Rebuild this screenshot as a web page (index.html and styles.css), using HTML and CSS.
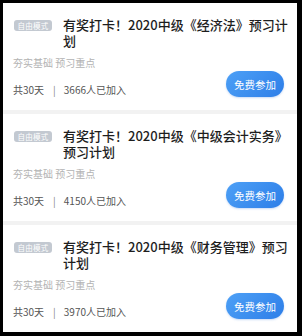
FILE: index.html
```html
<!DOCTYPE html>
<html lang="zh-CN">
<head>
<meta charset="utf-8">
<link rel="stylesheet" href="styles.css">
</head>
<body>
<div class="frame">
  <div class="card">
    <div class="head">
      <span class="badge">自由模式</span>
      <h2 class="title">有奖打卡！2020中级《经济法》预习计划</h2>
    </div>
    <p class="sub">夯实基础 预习重点</p>
    <div class="foot">
      <div class="meta"><span>共30天</span><span class="sep">|</span><span>3666人已加入</span></div>
      <button class="join">免费参加</button>
    </div>
  </div>
  <div class="card">
    <div class="head">
      <span class="badge">自由模式</span>
      <h2 class="title">有奖打卡！2020中级《中级会计实务》预习计划</h2>
    </div>
    <p class="sub">夯实基础 预习重点</p>
    <div class="foot">
      <div class="meta"><span>共30天</span><span class="sep">|</span><span>4150人已加入</span></div>
      <button class="join">免费参加</button>
    </div>
  </div>
  <div class="card">
    <div class="head">
      <span class="badge">自由模式</span>
      <h2 class="title">有奖打卡！2020中级《财务管理》预习计划</h2>
    </div>
    <p class="sub">夯实基础 预习重点</p>
    <div class="foot">
      <div class="meta"><span>共30天</span><span class="sep">|</span><span>3970人已加入</span></div>
      <button class="join">免费参加</button>
    </div>
  </div>
</div>
</body>
</html>
```
FILE: styles.css
```css
html, body {
  margin: 0;
  padding: 0;
  background: #000;
}
body {
  width: 302px;
  height: 336px;
  font-family: "Noto Sans CJK SC", "Noto Sans", sans-serif;
}
.frame {
  margin: 3px 5px 4px 3px;
  height: 329px;
  background: #f2f2f2;
  display: flex;
  flex-direction: column;
  gap: 4px;
}
.card {
  background: #fff;
  height: 107px;
  box-sizing: border-box;
  padding: 14px 13px 0 10px;
  display: flex;
  flex-direction: column;
}
.head {
  display: flex;
  align-items: flex-start;
}
.badge {
  flex: none;
  width: 38px;
  height: 11px;
  margin: 3px 11px 0 1px;
  border-radius: 3px;
  background: #c3c9d1;
  color: #fff;
  font-size: 7.5px;
  line-height: 11px;
  text-align: center;
  letter-spacing: 0.3px;
}
.title {
  margin: 0;
  flex: 1;
  margin-right: -8px;
  font-size: 13px;
  line-height: 16px;
  height: 32px;
  font-weight: 500;
  color: #1e1e1e;
}
.sub {
  margin: 8px 0 0;
  font-size: 10px;
  line-height: 12px;
  color: #b3b3b3;
}
.foot {
  margin-top: 2px;
  display: flex;
  align-items: center;
  justify-content: space-between;
}
.meta {
  display: flex;
  align-items: center;
  font-size: 10px;
  line-height: 14px;
  color: #555;
  margin-top: 11px;
}
.sep {
  margin: 0 8px 0 9px;
  color: #888;
}
.join {
  width: 58px;
  height: 26px;
  border: none;
  border-radius: 13px;
  padding: 0;
  background: linear-gradient(135deg, #4da0f6 0%, #2d7ee8 100%);
  color: #fff;
  font-family: inherit;
  font-size: 10.5px;
  box-shadow: 0 1px 2px rgba(40, 110, 220, 0.25);
}
```
